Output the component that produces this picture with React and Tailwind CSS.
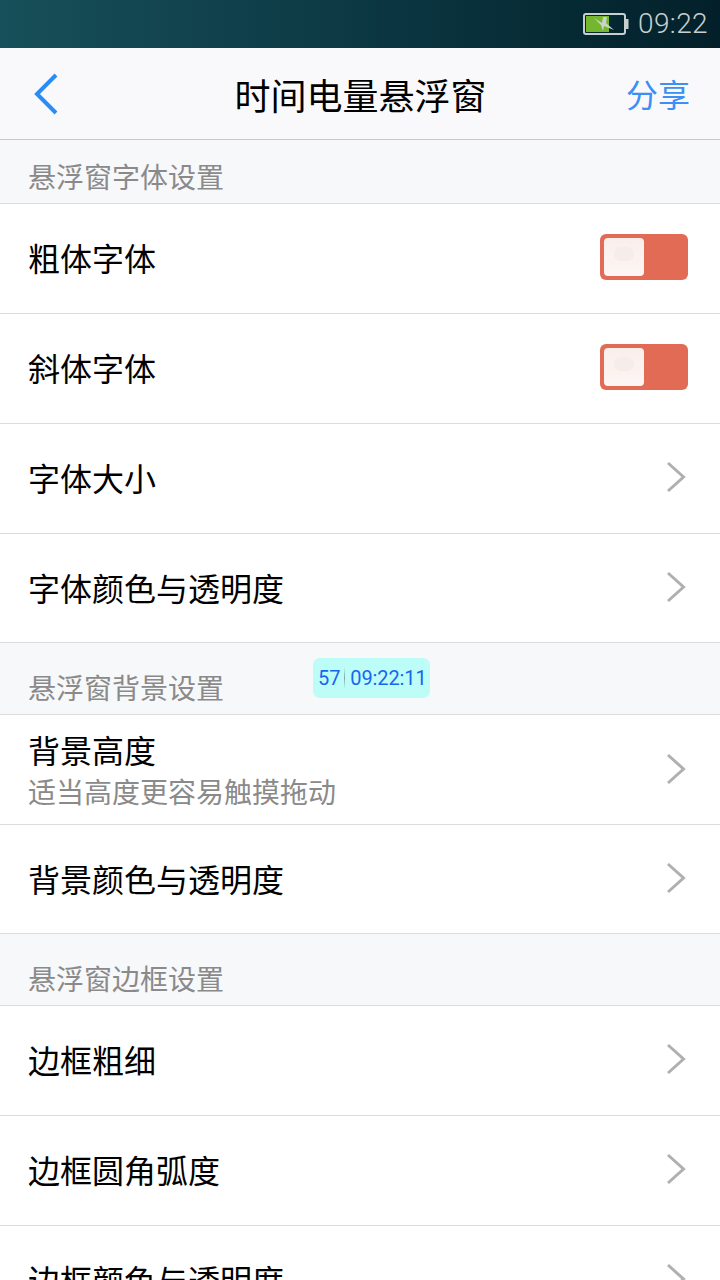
const Chevron = () => (
  <svg width="24" height="34" viewBox="0 0 24 34" fill="none" className="shrink-0">
    <path d="M4 3 L19.5 17 L4 31" stroke="#b0b0b0" strokeWidth="3" />
  </svg>
);

const Toggle = () => (
  <div className="w-[88px] h-[46px] rounded-[6px] bg-[#e26b55] p-[4px] shrink-0">
    <div className="w-[40px] h-[38px] rounded-[4px] bg-gradient-to-b from-[#faeeeb] to-[#fdf6f4] flex justify-center pt-[9px]">
      <div className="w-[20px] h-[14px] rounded-full bg-[#f6ecea]" />
    </div>
  </div>
);

function Section({ title, h }) {
  return (
    <div className={`${h} bg-[#f7f8fa] border-b border-[#dcdcdc] px-[28px] flex items-end pb-[1px]`}>
      <span className="text-[28px] leading-[52px] text-[#8a8a8a]">{title}</span>
    </div>
  );
}

function Row({ title, sub, right, h = "h-[110px]", pb = "pb-[4px]" }) {
  return (
    <div className={`${h} ${pb} bg-white border-b border-[#dcdcdc] pl-[28px] pr-[32px] flex items-center justify-between`}>
      <div className={`flex flex-col ${sub ? "mt-[2px]" : ""}`}>
        <span className={`${sub ? "leading-[42px]" : "leading-[44px]"} text-[32px] text-black`}>{title}</span>
        {sub && <span className="text-[28px] leading-[42px] text-[#8a8a8a]">{sub}</span>}
      </div>
      {right || <Chevron />}
    </div>
  );
}

export default function App() {
  return (
    <div className="relative w-[720px] h-[1280px] overflow-hidden bg-[#f7f8fa] font-['Noto_Sans_CJK_SC','Noto_Sans_CJK_JP',sans-serif]">
      <div className="h-[48px] bg-gradient-to-r from-[#17505a] via-[#0c3843] to-[#03202a] flex items-center justify-end pr-[12px] gap-[9px]">
        <svg width="46" height="22" viewBox="0 0 46 22" fill="none">
          <rect x="1" y="1" width="41" height="20" rx="2" stroke="#c8cfd0" strokeWidth="2" />
          <rect x="43" y="6" width="2.5" height="10" fill="#c8cfd0" />
          <rect x="3" y="3" width="23" height="16" fill="#75b62f" />
          <path d="M11 5 L19 10 L20 4 L24 4 L23 10 L31 17 L21 13 L20 18 L18 12 Z" fill="#c9d3c9" />
        </svg>
        <span className="font-['Roboto',sans-serif] font-light tracking-[0.4px] text-[28px] leading-[48px] text-[#c8cfd0]">09:22</span>
      </div>

      <div className="h-[92px] bg-[#f9f9fb] border-b border-[#c8c8c8] pl-[33px] pr-[30px] grid grid-cols-[1fr_auto_1fr] items-center">
        <svg width="26" height="42" viewBox="0 0 26 42" fill="none">
          <path d="M23 2 L4 21 L23 40" stroke="#2a8cf5" strokeWidth="4" />
        </svg>
        <span className="text-[36px] leading-[48px] text-black -ml-[2px]">时间电量悬浮窗</span>
        <span className="text-[32px] leading-[46px] pb-[2px] text-[#3b8ff5] text-right">分享</span>
      </div>

      <Section title="悬浮窗字体设置" h="h-[64px]" />
      <Row title="粗体字体" right={<Toggle />} />
      <Row title="斜体字体" right={<Toggle />} />
      <Row title="字体大小" />
      <Row title="字体颜色与透明度" h="h-[109px]" pb="pb-[2px]" />

      <Section title="悬浮窗背景设置" h="h-[72px]" />
      <Row title="背景高度" sub="适当高度更容易触摸拖动" pb="pb-[2px]" />
      <Row title="背景颜色与透明度" h="h-[109px]" pb="pb-[2px]" />

      <Section title="悬浮窗边框设置" h="h-[72px]" />
      <Row title="边框粗细" />
      <Row title="边框圆角弧度" />
      <Row title="边框颜色与透明度" />

      <div className="absolute left-[313px] top-[658px] w-[117px] h-[40px] rounded-[7px] bg-[#bcfdf8] pl-[5px] flex items-center font-['Roboto',sans-serif] tracking-[-0.1px] text-[20px] text-[#1766ee]">
        <span>57</span>
        <span className="w-px h-[22px] bg-gradient-to-b from-transparent via-[#7fa8a8] to-transparent ml-[4px] mr-[5px]" />
        <span>09:22:11</span>
      </div>
    </div>
  );
}
